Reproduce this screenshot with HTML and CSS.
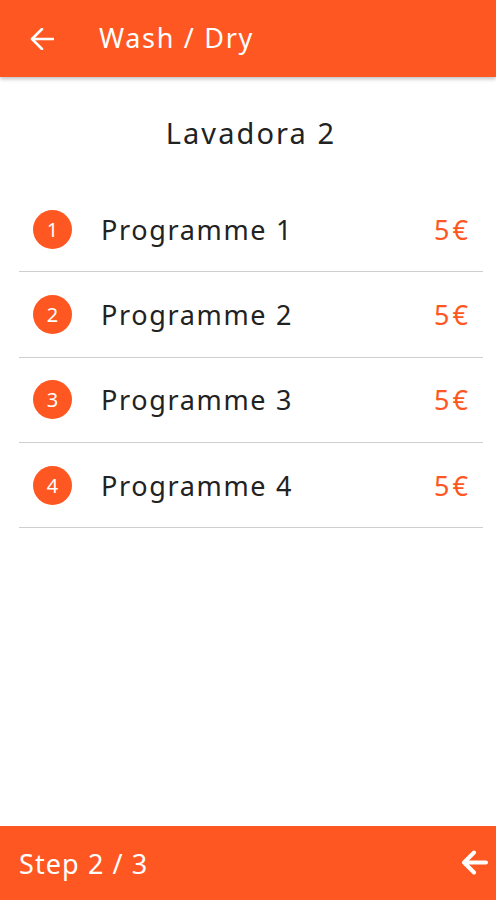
FILE: index.html
```html
<!DOCTYPE html>
<html lang="en">
<head>
<meta charset="UTF-8">
<meta name="viewport" content="width=device-width, initial-scale=1.0">
<title>Wash / Dry</title>
<link rel="stylesheet" href="styles.css">
</head>
<body>
<div class="app">
    <header class="topbar">
        <svg class="back" width="24" height="22" viewBox="0 0 24 22">
            <path d="M2 11H23M12 1L2 11L12 21" fill="none" stroke="#fff" stroke-width="2.6" stroke-linecap="round" stroke-linejoin="round"/>
        </svg>
        <span class="topbar-title">Wash / Dry</span>
    </header>

    <main class="content">
        <h2 class="machine">Lavadora 2</h2>
        <ul class="programs">
            <li class="program">
                <span class="num">1</span>
                <span class="name">Programme 1</span>
                <span class="price">5€</span>
            </li>
            <li class="program">
                <span class="num">2</span>
                <span class="name">Programme 2</span>
                <span class="price">5€</span>
            </li>
            <li class="program">
                <span class="num">3</span>
                <span class="name">Programme 3</span>
                <span class="price">5€</span>
            </li>
            <li class="program">
                <span class="num">4</span>
                <span class="name">Programme 4</span>
                <span class="price">5€</span>
            </li>
        </ul>
    </main>

    <footer class="bottombar">
        <span class="step">Step 2 / 3</span>
        <svg class="next" width="27" height="25" viewBox="0 0 27 25">
            <path d="M3 12.5H25M13 2.5L3 12.5L13 22.5" fill="none" stroke="#fff" stroke-width="4" stroke-linecap="round" stroke-linejoin="round"/>
        </svg>
    </footer>
</div>
</body>
</html>
```

FILE: styles.css
```css
body {
    margin: 0;
    font-family: "Noto Sans", Arial, sans-serif;
    background: #fff;
    color: #222;
}
.app {
    display: flex;
    flex-direction: column;
    height: 900px;
}
.topbar {
    position: relative;
    z-index: 1;
    height: 77px;
    flex-shrink: 0;
    background-color: #ff5722;
    color: #fff;
    display: flex;
    align-items: center;
    padding-left: 30px;
    box-shadow: 0 2px 4px rgba(0, 0, 0, 0.25);
}
.back {
    margin-top: 1px;
}
.topbar-title {
    margin-left: 45px;
    margin-top: -2px;
    font-size: 27px;
    letter-spacing: 1.7px;
}
.content {
    flex: 1;
}
.machine {
    margin: 36px 0 0;
    padding-left: 6px;
    height: 74px;
    font-size: 29px;
    font-weight: 400;
    letter-spacing: 2.1px;
    text-align: center;
    color: #222;
}
.programs {
    list-style: none;
    margin: 0 13px 0 19px;
    padding: 0;
}
.program {
    display: flex;
    align-items: center;
    height: 84.3px;
    padding: 0 15px 0 14px;
    border-bottom: 1px solid #cfcfcf;
}
.num {
    width: 39px;
    height: 39px;
    border-radius: 50%;
    background-color: #ff5722;
    color: #fff;
    font-size: 20px;
    display: flex;
    align-items: center;
    justify-content: center;
    flex-shrink: 0;
}
.name {
    flex: 1;
    margin-left: 29px;
    font-size: 27px;
    letter-spacing: 1.65px;
    color: #222;
}
.price {
    font-size: 27px;
    letter-spacing: 3px;
    margin-right: -3px;
    color: #ff5722;
}
.bottombar {
    height: 74px;
    flex-shrink: 0;
    background-color: #ff5722;
    color: #fff;
    display: flex;
    align-items: center;
    justify-content: space-between;
    padding: 0 8px 0 19px;
}
.step {
    font-size: 27px;
    letter-spacing: 1.1px;
}
.next {
    margin-top: -2px;
}
```
